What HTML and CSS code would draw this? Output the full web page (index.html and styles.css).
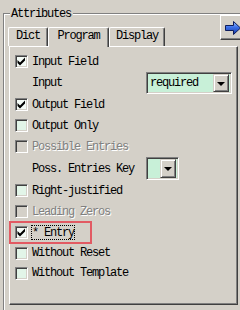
FILE: index.html
```html
<!DOCTYPE html>
<html lang="en">
  <head>
    <meta charset="UTF-8" />
    <meta name="viewport" content="width=device-width, initial-scale=1.0" />
    <title>Attributes</title>
    <link rel="stylesheet" href="styles.css">
  </head>
  <body>
    <div class="group">
      <span class="group-title">Attributes</span>

      <div class="tab-row">
        <div class="tabs">
          <div class="tab tab-dict">Dict</div>
          <div class="tab tab-program active">Program</div>
          <div class="tab tab-display">Display</div>
        </div>
        <button class="next-btn" title="Next">
          <svg width="16" height="14" viewBox="0 0 16 14">
            <defs>
              <linearGradient id="arrowFill" x1="0" y1="0" x2="0" y2="1">
                <stop offset="0" stop-color="#9cc4ff" />
                <stop offset="0.45" stop-color="#3a6ee8" />
                <stop offset="1" stop-color="#1838a0" />
              </linearGradient>
            </defs>
            <polygon
              points="0.5,4.5 8.5,4.5 8.5,0.5 15.5,7 8.5,13.5 8.5,9.5 0.5,9.5"
              fill="url(#arrowFill)"
              stroke="#0c1c5c"
              stroke-width="1"
            />
          </svg>
        </button>
      </div>

      <div class="panel">
        <div class="row">
          <span class="check checked"></span>
          <span class="text">Input Field</span>
        </div>
        <div class="row row-combo">
          <span class="text indent">Input</span>
          <div class="combo">
            <div class="combo-field wide">required</div>
            <div class="combo-btn"></div>
          </div>
        </div>
        <div class="row">
          <span class="check checked"></span>
          <span class="text">Output Field</span>
        </div>
        <div class="row">
          <span class="check"></span>
          <span class="text">Output Only</span>
        </div>
        <div class="row disabled">
          <span class="check"></span>
          <span class="text">Possible Entries</span>
        </div>
        <div class="row row-combo-small">
          <span class="text indent">Poss. Entries Key</span>
          <div class="combo combo-small">
            <div class="combo-field small"></div>
            <div class="combo-btn"></div>
          </div>
        </div>
        <div class="row">
          <span class="check"></span>
          <span class="text">Right-justified</span>
        </div>
        <div class="row disabled">
          <span class="check"></span>
          <span class="text">Leading Zeros</span>
        </div>
        <div class="row marked">
          <span class="check checked"></span>
          <span class="text focus">* Entry</span>
        </div>
        <div class="row row-short">
          <span class="check"></span>
          <span class="text">Without Reset</span>
        </div>
        <div class="row row-short">
          <span class="check"></span>
          <span class="text">Without Template</span>
        </div>
      </div>
    </div>
  </body>
</html>
```

FILE: styles.css
```css
html,
body {
  overflow: hidden;
}

body {
  margin: 0;
  width: 240px;
  height: 310px;
  background-color: #d4d0c8;
  font-family: "Liberation Mono", "Courier New", monospace;
  font-size: 12px;
  letter-spacing: -1.2px;
  color: #000;
}

.group {
  margin: 13px 0 0 3px;
  height: 300px;
  border-top: 1px solid #808080;
  border-left: 1px solid #808080;
  box-shadow: inset 1px 1px 0 #ffffff;
}

.group-title {
  display: block;
  width: fit-content;
  margin: -7px 0 -7px 6px;
  padding: 0 2px 0 1px;
  line-height: 14px;
  background-color: #d4d0c8;
}

.tab-row {
  display: flex;
  align-items: flex-end;
  justify-content: space-between;
  box-sizing: border-box;
  height: 32px;
  padding-left: 4px;
}

.tabs {
  display: flex;
  align-items: flex-end;
}

.tab {
  box-sizing: border-box;
  height: 19px;
  line-height: 17px;
  text-align: center;
  border-top: 1px solid #ffffff;
  border-left: 1px solid #ffffff;
  border-right: 1px solid #404040;
  border-radius: 2px 2px 0 0;
  box-shadow: inset -1px 0 0 #808080;
}

.tab-dict {
  width: 40px;
}

.tab-program {
  width: 61px;
}

.tab-display {
  width: 56px;
}

.tab.active {
  position: relative;
  height: 20px;
  margin-bottom: -1px;
  background-color: #d4d0c8;
}

.next-btn {
  align-self: flex-start;
  flex: none;
  box-sizing: border-box;
  width: 24px;
  height: 25px;
  margin: 1px -4px 0 0;
  padding: 0 0 0 1px;
  display: flex;
  align-items: center;
  justify-content: center;
  background-color: #d4d0c8;
  border: 1px solid;
  border-color: #ffffff #404040 #404040 #ffffff;
  box-shadow: inset -1px -1px 0 #808080;
}

.panel {
  box-sizing: border-box;
  width: 229px;
  height: 259px;
  margin-left: 5px;
  padding-top: 4px;
  border: 1px solid;
  border-color: #ffffff #404040 #404040 #ffffff;
  box-shadow: inset -1px -1px 0 #808080;
}

.row {
  display: flex;
  align-items: center;
  box-sizing: border-box;
  height: 21px;
  padding-left: 5px;
}

.row-combo {
  height: 22px;
}

.row-combo-small {
  height: 23px;
}

.row-short {
  height: 20px;
}

.check {
  box-sizing: border-box;
  flex: none;
  width: 13px;
  height: 13px;
  border: 1px solid;
  border-color: #808080 #ffffff #ffffff #808080;
  box-shadow: inset 1px 1px 0 #404040, inset -1px -1px 0 #d4d0c8;
  background-color: #e2f5e8;
}

.check.checked {
  background-color: #f4fbf6;
  background-image: url("data:image/svg+xml,%3Csvg xmlns='http://www.w3.org/2000/svg' width='11' height='11'%3E%3Cpath d='M1.5 4 L4 6.5 L9 1.5 V4.5 L4 9.5 L1.5 7 Z' fill='%23000'/%3E%3C/svg%3E");
  background-position: 0 0;
  background-repeat: no-repeat;
}

.text {
  margin-left: 4px;
  white-space: nowrap;
}

.text.indent {
  flex: none;
  width: 114px;
  margin-left: 17px;
}

.disabled .check {
  background-color: #d4d0c8;
}

.disabled .text {
  color: #808080;
  text-shadow: 1px 1px 0 #ffffff;
}

.marked {
  width: 81px;
  outline: 2px solid #e25a63;
  outline-offset: -1px;
}

.focus {
  padding: 1px 1px 0;
  margin-left: 3px;
  outline: 1px dotted #000;
  outline-offset: -1px;
}

.combo {
  flex: none;
  display: flex;
  height: 22px;
  padding: 2px;
  border: 1px solid;
  border-color: #808080 #ffffff #ffffff #808080;
  box-shadow: inset 1px 1px 0 #404040, inset -1px -1px 0 #d4d0c8;
  box-sizing: border-box;
  background-color: #c8f0d8;
}

.combo-small {
  height: 23px;
}

.combo-field {
  flex: none;
  line-height: 16px;
  padding-left: 1px;
  box-sizing: border-box;
}

.combo-field.wide {
  width: 64px;
}

.combo-field.small {
  width: 11px;
}

.combo-btn {
  flex: none;
  box-sizing: border-box;
  width: 16px;
  margin: -1px 0;
  background-color: #d4d0c8;
  border: 1px solid;
  border-color: #d4d0c8 #404040 #404040 #d4d0c8;
  box-shadow: inset 1px 1px 0 #ffffff, inset -1px -1px 0 #808080;
  display: flex;
  align-items: center;
  justify-content: center;
}

.combo-btn::after {
  content: "";
  width: 0;
  height: 0;
  margin-top: 1px;
  border-left: 4px solid transparent;
  border-right: 4px solid transparent;
  border-top: 4px solid #000;
}
```
